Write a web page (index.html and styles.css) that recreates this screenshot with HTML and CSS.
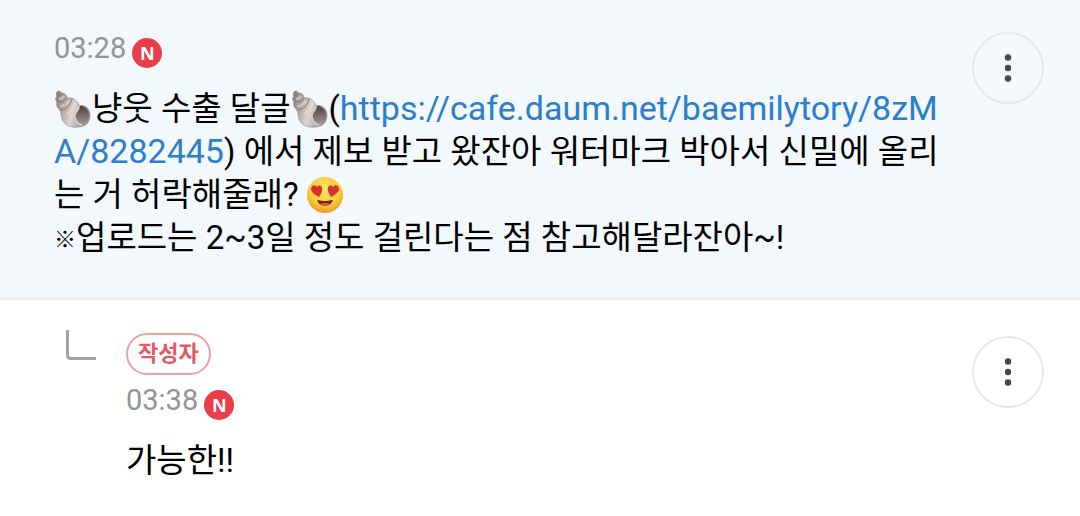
FILE: index.html
```html
<!DOCTYPE html>
<html lang="ko">
<head>
<meta charset="utf-8">
<meta name="viewport" content="width=device-width">
<title>댓글</title>
<link rel="stylesheet" href="styles.css">
</head>
<body>
<svg class="defs" aria-hidden="true">
  <defs>
    <linearGradient id="shellBody" x1="0" y1=".4" x2="1" y2=".7">
      <stop offset="0" stop-color="#8f8581"/><stop offset=".3" stop-color="#bdb4b1"/><stop offset=".5" stop-color="#dcd5d3"/><stop offset="1" stop-color="#94898a"/>
    </linearGradient>
    <linearGradient id="shellHole" x1="0" y1="0" x2="0" y2="1">
      <stop offset="0" stop-color="#4a403d"/><stop offset="1" stop-color="#a1948f"/>
    </linearGradient>
    <radialGradient id="face" cx=".5" cy=".35" r=".65">
      <stop offset="0" stop-color="#ffe45c"/><stop offset=".65" stop-color="#fdcb3c"/><stop offset="1" stop-color="#e79a25"/>
    </radialGradient>
    <symbol id="shell" viewBox="0 0 38 38">
      <path d="M3 2C4 0 7 1 7 3C11 3 13 5 13 8C19 7 24 11 25 16C30 14 36 18 36 25C36 33 31 37 24 37C17 38 10 35 8 29C7 26 7 23 6 20C3 18 2 15 3 12C1 10 1 8 3 6C2 5 2 3 3 2Z" fill="url(#shellBody)" stroke="#8b807c" stroke-width=".6"/>
      <path d="M3 6C5 6 7 5 7 3M3 12C7 12 12 11 13 8M6 20C12 20 17 15 18 8.500" fill="none" stroke="#857b77" stroke-width="1"/>
      <path d="M5 9C7 9 9 8 10 6M6 16C10 16 13 14 15 11M13 24C17 20 21 18 21 13" fill="none" stroke="#e6e0de" stroke-width="2" opacity=".6"/>
      <path d="M25 16C27 20 20 23 22 28C23 32 25 34 28 34C32 33 36 29 35 24C34 19 30 15 25 16Z" fill="url(#shellHole)"/>
      <path d="M25 16C26 20 19 23 21 28C22 32 24 34 28 35" fill="none" stroke="#d8cfcb" stroke-width="1.500"/>
    </symbol>
    <symbol id="heart-eyes" viewBox="0 0 38 38">
      <circle cx="18" cy="19" r="18" fill="url(#face)"/>
      <path d="M12 21C8 19 4 16 4 13C4 9 8 8 10 11C12 8 16 10 15 14C15 17 13 19 12 21Z" fill="#d6322c"/>
      <path d="M24 21C28 19 32 16 32 13C32 9 28 8 26 11C24 8 20 10 21 14C21 17 23 19 24 21Z" fill="#d6322c"/>
      <path d="M11 24Q18 26 25 24C26 24 26 25 25 26C23 31 13 31 11 26C10 25 10 24 11 24Z" fill="#6b2d16"/>
      <path d="M13 28Q18 26 23 28Q18 31 13 28Z" fill="#e3593f"/>
    </symbol>
    <symbol id="dots" viewBox="0 0 8 30">
      <circle cx="4" cy="4.500" r="3.200"/><circle cx="4" cy="15" r="3.200"/><circle cx="4" cy="25.500" r="3.200"/>
    </symbol>
  </defs>
</svg>
<main>
  <article class="comment">
    <div class="content">
      <div class="meta"><time datetime="03:28">03:28</time><span class="new">N</span></div>
      <p class="text"><svg class="emoji" role="img" aria-label="소라"><use href="#shell"/></svg>냥웃 수출 달글<svg class="emoji" role="img" aria-label="소라"><use href="#shell"/></svg>(<a href="https://cafe.daum.net/baemilytory/8zMA/8282445">https://cafe.daum.net/baemilytory/8zMA/8282445</a>) 에서 제보 받고 왔잔아 워터마크 박아서 신밀에 올리는 거 허락해줄래? <svg class="emoji" role="img" aria-label="하트 눈"><use href="#heart-eyes"/></svg><br><span class="mark">※</span>업로드는 2~3일 정도 걸린다는 점 참고해달라잔아~!</p>
    </div>
    <button class="more" type="button" aria-label="더보기"><svg class="dots"><use href="#dots"/></svg></button>
  </article>
  <article class="comment reply">
    <svg class="branch" viewBox="0 0 30 30" aria-hidden="true"><path d="M1.500 0V25Q1.500 28.500 5 28.500H30"/></svg>
    <div class="content">
      <span class="author">작성자</span>
      <div class="meta"><time datetime="03:38">03:38</time><span class="new">N</span></div>
      <p class="text">가능한!!</p>
    </div>
    <button class="more" type="button" aria-label="더보기"><svg class="dots"><use href="#dots"/></svg></button>
  </article>
</main>
</body>
</html>
```
FILE: styles.css
```css
* { box-sizing: border-box; }
body {
  margin: 0;
  background: #fff;
  color: #000;
  font-family: Roboto, "Noto Sans CJK KR", sans-serif;
}
.defs { position: absolute; width: 0; height: 0; }
.comment {
  display: flex;
  align-items: flex-start;
  padding: 32px 36px 38px 54px;
  background: #f3f8fd;
  border-bottom: 3px solid #eceef0;
}
.content { flex: 1; min-width: 0; margin-right: 26px; }
.meta {
  display: flex;
  align-items: flex-end;
  gap: 6px;
  height: 36px;
}
.meta time {
  align-self: flex-start;
  color: #929496;
  font-size: 29px;
  line-height: 32px;
}
.new {
  display: flex;
  align-items: center;
  justify-content: center;
  width: 30px;
  height: 30px;
  border-radius: 50%;
  background: #ea3d4a;
  color: #fff;
  font: 700 18px/30px "Open Sans", sans-serif;
}
.text {
  margin: 19px 0 0;
  font-size: 33px;
  line-height: 43px;
  word-break: break-all;
}
.text a { color: #2a7ecb; font-size: 34px; text-decoration: none; }
.mark { font-size: 22px; font-weight: 700; line-height: 1; vertical-align: 2px; }
.emoji { width: 38px; height: 38px; vertical-align: -8px; }
.more {
  display: flex;
  align-items: center;
  justify-content: center;
  width: 72px;
  height: 72px;
  padding: 0;
  border: 2px solid #e6e8ea;
  border-radius: 50%;
  background: transparent;
}
.dots { width: 8px; height: 30px; fill: #45484a; }
.reply {
  padding: 30px 36px 32px 66px;
  background: #fff;
  border-bottom: 0;
}
.reply .content { margin-top: 3px; }
.branch {
  width: 30px;
  height: 30px;
  margin-right: 30px;
  fill: none;
  stroke: #a2a2a2;
  stroke-width: 3;
}
.author {
  display: block;
  width: fit-content;
  margin-bottom: 9px;
  padding: 0 10px;
  border: 2px solid #eea0a5;
  border-radius: 21px;
  color: #df5b65;
  font-size: 22px;
  font-weight: 700;
  line-height: 38px;
}
.reply .more { margin-top: 6px; }
```
